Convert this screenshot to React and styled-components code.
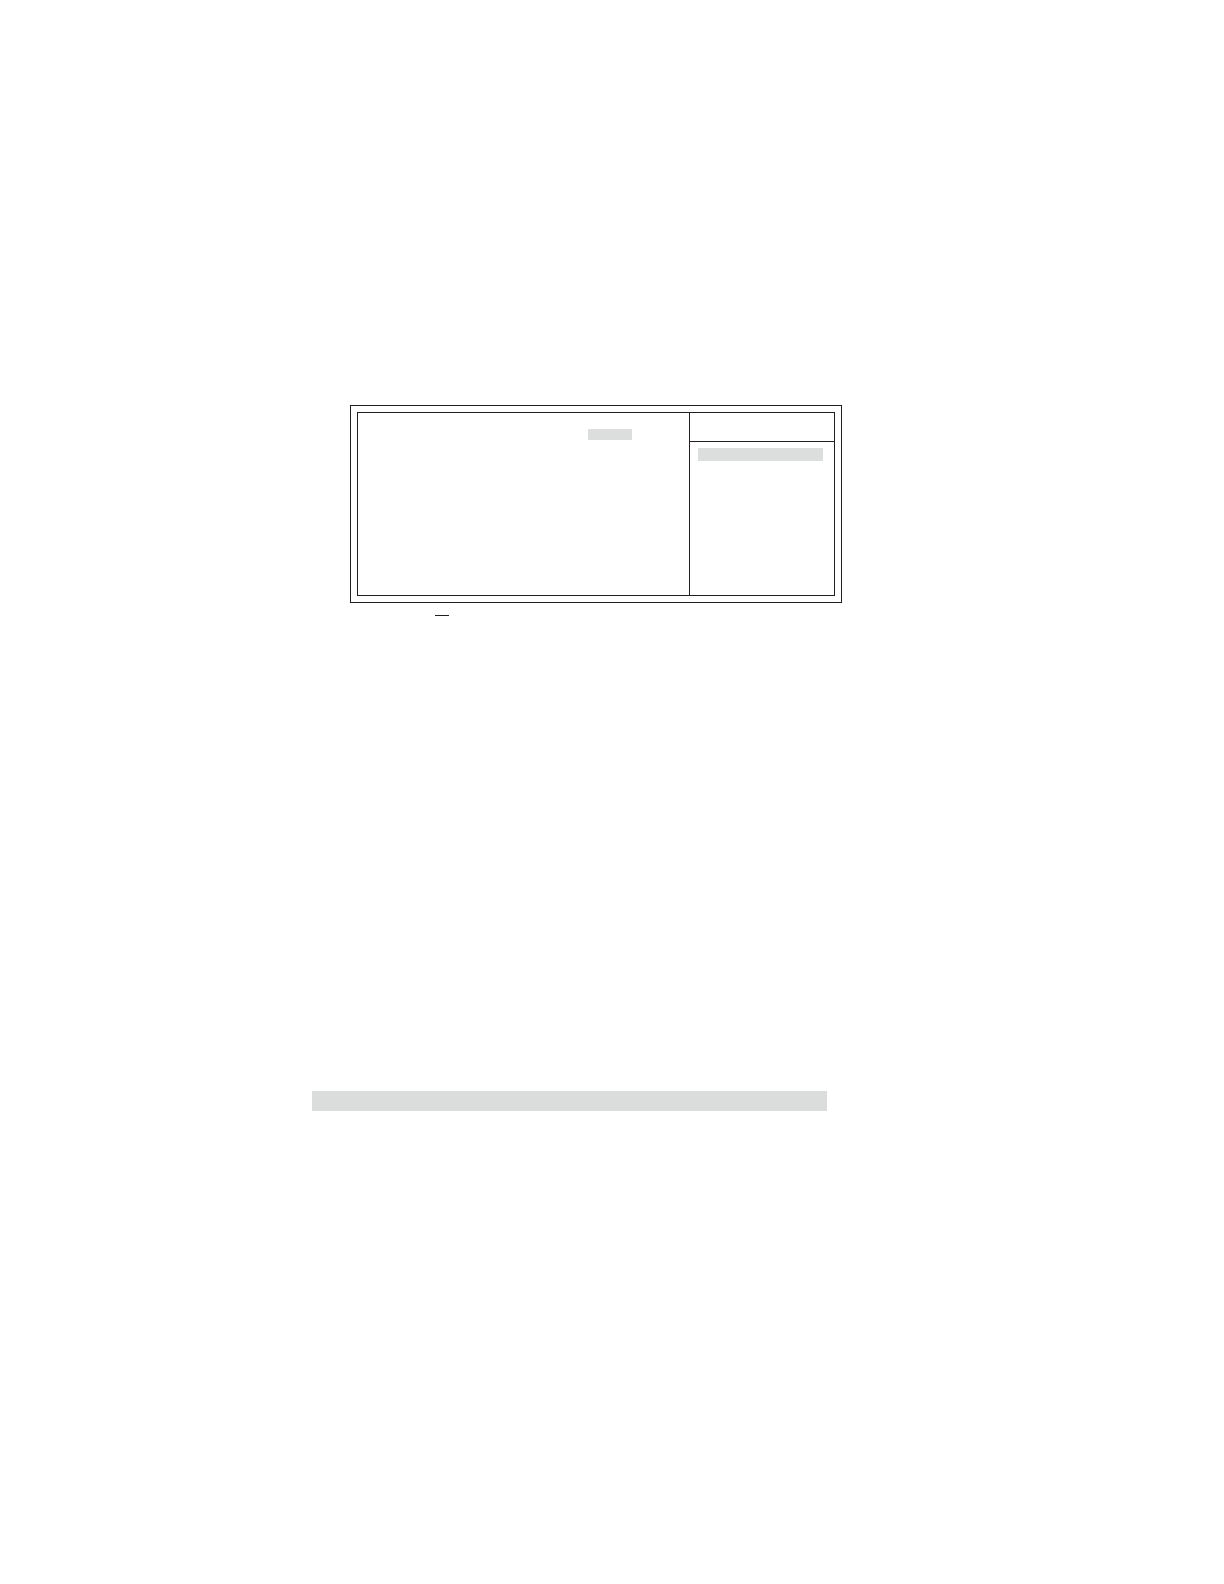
import React from 'react';
import styled, { createGlobalStyle } from 'styled-components';

const GlobalStyle = createGlobalStyle`
    body {
        margin: 0;
        background-color: #fff;
        font-family: "Liberation Sans", Arial, sans-serif;
    }
`

const Page = styled.div`
    display: grid;
    grid-template-columns: 312fr 530fr 382fr;
    box-sizing: border-box;
    min-height: 100vh;
    padding-top: 405px;
`

const Sheet = styled.main`
    grid-column: 2;
    display: flex;
    flex-direction: column;
`

const Frame = styled.section`
    margin-left: 38px;
    padding: 6px;
    border: 1px solid #231f20;
`

const Screen = styled.div`
    display: grid;
    grid-template-columns: 1fr 145px;
    min-height: 182px;
    border: 1px solid #231f20;
`

const Options = styled.div`
    display: flex;
    justify-content: flex-end;
    align-items: flex-start;
    padding: 16px 57px 0 8px;
`

const Help = styled.aside`
    border-left: 1px solid #231f20;
`

const HelpHeader = styled.div`
    height: 28px;
    border-bottom: 1px solid #231f20;
`

const HelpBody = styled.div`
    padding: 6px 11px 0 8px;
`

const Highlight = styled.div`
    width: ${({ $width }) => $width || 'auto'};
    height: ${({ $height }) => $height};
    background-color: #dcdddd;
`

const Rule = styled.hr`
    width: 14px;
    height: 1px;
    margin: 12px 0 0 123px;
    border: none;
    background-color: #231f20;
`

const Band = styled.div`
    height: 20px;
    margin: 475px 15px 0 0;
    background-color: #dbdddd;
`

export default function App() {
    return (
        <>
            <GlobalStyle />
            <Page>
                <Sheet>
                    <Frame>
                        <Screen>
                            <Options>
                                <Highlight $width="44px" $height="11px" />
                            </Options>
                            <Help>
                                <HelpHeader />
                                <HelpBody>
                                    <Highlight $height="13px" />
                                </HelpBody>
                            </Help>
                        </Screen>
                    </Frame>
                    <Rule />
                    <Band />
                </Sheet>
            </Page>
        </>
    );
};
